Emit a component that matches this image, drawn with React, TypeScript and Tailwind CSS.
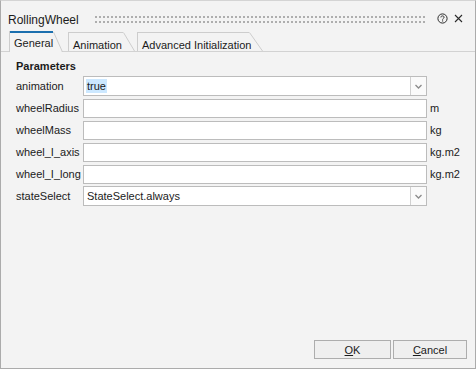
import React from "react";

function Tab({
  label,
  width,
  height,
  topRight,
  selected,
  className,
}: {
  label: string;
  width: number;
  height: number;
  topRight: number;
  selected?: boolean;
  className?: string;
}) {
  return (
    <div
      className={`relative shrink-0 ${className ?? ""}`}
      style={{ width, height }}
    >
      <svg
        className="absolute inset-0"
        width={width}
        height={height}
        viewBox={`0 0 ${width} ${height}`}
      >
        <polygon
          points={`0,0 ${topRight},0 ${width - 1},${height} 0,${height}`}
          fill="#f3f3f3"
        />
        <line x1="0.5" y1="0" x2="0.5" y2={height} stroke="#cdcdcd" />
        {selected ? (
          <rect x="1" y="0" width={topRight - 1} height="2" fill="#1b6fae" />
        ) : (
          <line x1="0" y1="0.5" x2={topRight} y2="0.5" stroke="#cdcdcd" />
        )}
        <line
          x1={topRight + 0.5}
          y1={selected ? 1 : 0.5}
          x2={width - 0.5}
          y2={height}
          stroke="#cdcdcd"
        />
      </svg>
      <span
        className={`relative block pl-[5px] text-[11px] leading-[14px] text-[#1b1b1b] ${
          selected ? "pt-[5px]" : "pt-[6px]"
        }`}
      >
        {label}
      </span>
    </div>
  );
}

function Chevron() {
  return (
    <svg width="7" height="5" viewBox="0 0 7 5">
      <polyline
        points="0.5,1 3.5,4 6.5,1"
        fill="none"
        stroke="#8a8a8a"
        strokeWidth="1.3"
      />
    </svg>
  );
}

function SelectBox({ value, highlight }: { value: string; highlight?: boolean }) {
  return (
    <div className="flex h-[20px] w-[344px] border border-[#bcbcbc] bg-white">
      <div className="flex flex-1 items-center pl-[2px]">
        <span
          className={`px-[1px] text-[11px] leading-[14px] text-[#1b1b1b] ${
            highlight ? "bg-[#cce8ff]" : ""
          }`}
        >
          {value}
        </span>
      </div>
      <div className="flex w-[16px] items-center justify-center border-l border-[#d0d0d0] bg-[#fafafa]">
        <Chevron />
      </div>
    </div>
  );
}

function TextBox() {
  return <div className="h-[19px] w-[344px] border border-[#bcbcbc] bg-white" />;
}

function Row({
  label,
  children,
  unit,
}: {
  label: string;
  children: React.ReactNode;
  unit?: string;
}) {
  return (
    <div className="flex h-[22px] items-center">
      <div className="w-[67px] text-[11px] leading-[14px] text-[#1b1b1b]">
        {label}
      </div>
      {children}
      {unit && (
        <div className="pl-[3px] text-[11px] leading-[14px] text-[#1b1b1b]">
          {unit}
        </div>
      )}
    </div>
  );
}

export default function App() {
  return (
    <div className="flex h-[369px] w-[476px] flex-col border border-[#ababab] border-t-[#d4d4d4] bg-[#f3f3f3] font-['Liberation_Sans',Arial,sans-serif] text-[#1b1b1b]">
      {/* Title bar */}
      <div className="flex h-[30px] items-start">
        <div className="ml-[7px] mt-[11px] text-[12px] leading-[16px] text-[#1b1b1b]">
          RollingWheel
        </div>
        <svg
          className="ml-[16px] mt-[15px]"
          width="332"
          height="8"
          viewBox="0 0 332 8"
        >
          <defs>
            <pattern
              id="grip"
              width="4"
              height="5"
              patternUnits="userSpaceOnUse"
            >
              <rect x="0" y="0" width="2" height="2" fill="#aeaeae" />
            </pattern>
          </defs>
          <rect x="0" y="0" width="332" height="7" fill="url(#grip)" />
        </svg>
        <svg
          className="ml-[10px] mt-[12px]"
          width="11"
          height="11"
          viewBox="0 0 11 11"
        >
          <circle cx="5.5" cy="5.5" r="4.6" fill="none" stroke="#2b2b2b" strokeWidth="1" />
          <path
            d="M3.9 4.4 C3.9 3.4 4.6 2.9 5.5 2.9 C6.4 2.9 7.1 3.5 7.1 4.3 C7.1 5.3 5.6 5.4 5.6 6.6"
            fill="none"
            stroke="#2b2b2b"
            strokeWidth="1"
          />
          <rect x="5.05" y="7.4" width="1.1" height="1.1" fill="#2b2b2b" />
        </svg>
        <svg
          className="ml-[6px] mt-[13px]"
          width="9"
          height="9"
          viewBox="0 0 9 9"
        >
          <path d="M1 1 L8 8 M8 1 L1 8" stroke="#2b2b2b" strokeWidth="1.1" />
        </svg>
      </div>

      {/* Tab strip */}
      <div className="flex h-[21px] items-end border-b border-[#d2d2d2] pl-[8px]">
        <Tab
          label="General"
          width={54}
          height={21}
          topRight={44}
          selected
          className="z-10 -mb-px"
        />
        <Tab
          label="Animation"
          width={67}
          height={19}
          topRight={55}
          className="ml-[5px]"
        />
        <Tab
          label="Advanced Initialization"
          width={126}
          height={19}
          topRight={112}
          className="ml-[2px]"
        />
      </div>

      {/* Content */}
      <div className="flex flex-1 flex-col pl-[15px]">
        <div className="mt-[7px] mb-[2px] text-[11px] font-bold leading-[14px] text-[#1b1b1b]">
          Parameters
        </div>
        <Row label="animation">
          <SelectBox value="true" highlight />
        </Row>
        <Row label="wheelRadius" unit="m">
          <TextBox />
        </Row>
        <Row label="wheelMass" unit="kg">
          <TextBox />
        </Row>
        <Row label="wheel_I_axis" unit="kg.m2">
          <TextBox />
        </Row>
        <Row label="wheel_I_long" unit="kg.m2">
          <TextBox />
        </Row>
        <Row label="stateSelect">
          <SelectBox value="StateSelect.always" />
        </Row>
      </div>

      {/* Footer */}
      <div className="flex justify-end gap-[2px] pb-[9px] pr-[8px]">
        <button className="flex h-[19px] w-[77px] items-center justify-center border border-[#adadad] bg-[#efefef] text-[11px] leading-[14px] text-[#1b1b1b]">
          <span>
            <span className="underline">O</span>K
          </span>
        </button>
        <button className="flex h-[19px] w-[74px] items-center justify-center border border-[#adadad] bg-[#efefef] text-[11px] leading-[14px] text-[#1b1b1b]">
          <span>
            <span className="underline">C</span>ancel
          </span>
        </button>
      </div>
    </div>
  );
}
